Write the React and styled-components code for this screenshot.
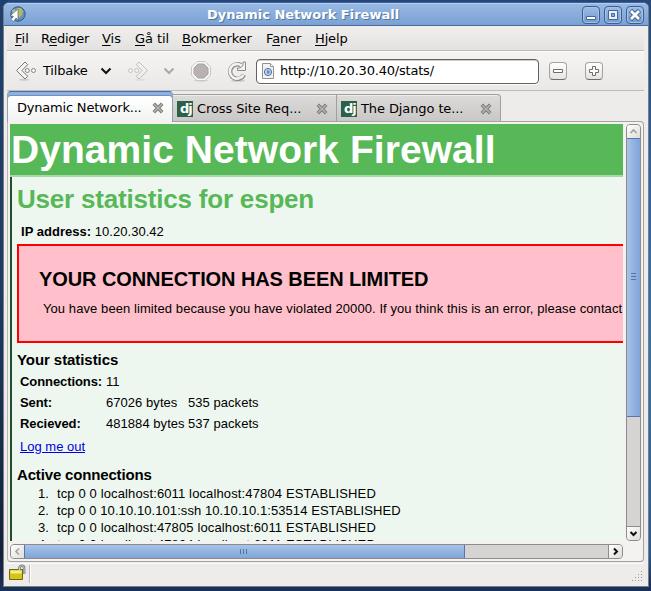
import React from "react";
import styled, { createGlobalStyle } from "styled-components";

const Global = createGlobalStyle`
  * { box-sizing: border-box; }
  html, body { margin: 0; padding: 0; overflow: hidden; }
  body { font-family: "DejaVu Sans", sans-serif; font-size: 13px; color: #000; }
`;

const Desktop = styled.div`
  width: 651px;
  height: 591px;
  padding: 2px 2px 4px 3px;
  background: linear-gradient(180deg, transparent 94%, #17305a 99%),
    linear-gradient(180deg, #1f406e 0%, #1d3b66 50%, #111d36 100%) left / 8px 100% no-repeat,
    linear-gradient(180deg, #264a7c 0%, #2f66a6 35%, #3473aa 60%, #28568f 100%) right / 8px 100% no-repeat,
    #24467a;
`;

const Window = styled.div`
  width: 646px;
  height: 585px;
  border: 1px solid #7d7d7b;
  border-top-color: #3f6296;
  border-radius: 6px 6px 0 0;
  background: #edeceb;
  display: flex;
  flex-direction: column;
  overflow: hidden;
`;

const TitleBar = styled.header`
  height: 23px;
  flex: none;
  display: flex;
  align-items: center;
  padding: 0 4px 0 5px;
  border-top: 1px solid #b5cdec;
  border-bottom: 1px solid #476a9f;
  background: linear-gradient(#97b8e4, #7ba1d3);
`;

const WindowTitle = styled.div`
  flex: 1;
  padding-right: 2px;
  text-align: center;
  color: #fff;
  font-weight: bold;
  font-size: 13px;
  line-height: 20px;
  text-shadow: 1px 1px 0 #55779f;
  white-space: nowrap;
`;

const WindowButtons = styled.div`
  width: 62px;
  display: flex;
  gap: 4px;
`;

const WindowButton = styled.div`
  width: 18px;
  height: 18px;
  border: 1px solid #3c5f92;
  border-radius: 4px;
  background: linear-gradient(#9dbce6, #7399cc);
  box-shadow: inset 0 0 0 1px #a5c1e8;
  svg { display: block; width: 16px; height: 16px; }
`;

const MenuBar = styled.nav`
  height: 25px;
  flex: none;
  margin: 0 4px 0 3px;
  display: flex;
  padding: 3px 0 0 8px;
  border-bottom: 1px solid #bdbcba;
  background: linear-gradient(#f0efee, #e3e2e0);
`;

const MenuItem = styled.span`
  width: ${(p) => p.$w}px;
  flex: none;
  line-height: 19px;
  letter-spacing: ${(p) => p.$ls}px;
  white-space: nowrap;
  u { text-underline-offset: 2px; text-decoration-thickness: 1px; }
`;

const ToolBar = styled.div`
  height: 40px;
  flex: none;
  margin: 0 4px 0 3px;
  border-top: 1px solid #fbfbfb;
  border-bottom: 1px solid #bdbcba;
  background: linear-gradient(#f5f4f3, #e9e8e6);
  display: flex;
  align-items: center;
  padding-left: 8px;
`;

const ToolIcon = styled.svg`
  width: ${(p) => p.$w}px;
  height: ${(p) => p.$h || 24}px;
  margin-left: ${(p) => p.$ml || 0}px;
  flex: none;
  overflow: visible;
`;

const ToolLabel = styled.span`
  width: 45px;
  margin-left: 6px;
  line-height: 20px;
  letter-spacing: -0.2px;
  white-space: nowrap;
`;

const AddressBar = styled.div`
  width: 283px;
  height: 25px;
  margin-left: 8px;
  flex: none;
  border: 1px solid #62615f;
  border-radius: 4px;
  background: #fff;
  box-shadow: inset 0 1px 0 #cfcecc, 0 1px 0 #fbfbfb;
  display: flex;
  align-items: center;
  padding-left: 4px;
  gap: 5px;
`;

const AddressText = styled.span`
  line-height: 22px;
  letter-spacing: -0.2px;
`;

const ZoomButton = styled.div`
  width: 18px;
  height: 18px;
  margin-left: ${(p) => p.$ml}px;
  flex: none;
  border: 1px solid #a3a29f;
  border-bottom-color: #6e6d6a;
  border-radius: 4px;
  background: linear-gradient(#fff, #e4e3e1);
  svg { display: block; width: 16px; height: 16px; }
`;

const TabStrip = styled.div`
  height: 30px;
  flex: none;
  margin-left: 3px;
  display: flex;
  align-items: flex-end;
`;

const Tab = styled.div`
  width: ${(p) => p.$w}px;
  height: ${(p) => (p.$active ? 31 : 27)}px;
  margin-bottom: ${(p) => (p.$active ? -1 : 0)}px;
  z-index: ${(p) => (p.$active ? 1 : 0)};
  flex: none;
  display: flex;
  align-items: center;
  border: 1px solid ${(p) => (p.$active ? "#8f9fb5" : "#a09f9d")};
  border-left-width: ${(p) => (p.$middle ? 0 : 1)}px;
  border-bottom: 0;
  border-top-color: ${(p) => (p.$active ? "#4a6ea8" : "#a09f9d")};
  border-radius: ${(p) => (p.$active ? "4px 4px 0 0" : p.$last ? "0 4px 0 0" : "0")};
  box-shadow: ${(p) => (p.$active ? "inset 0 3px 0 #8fb1e0, inset 0 4px 0 #6d92c6" : "inset 0 1px 0 #ececeb")};
  background: ${(p) => (p.$active ? "linear-gradient(#fff 20%, #f3f2f1)" : "linear-gradient(#dcdbd9, #c9c8c6)")};
`;

const TabTitle = styled.span`
  flex: 1;
  min-width: 0;
  padding-left: ${(p) => p.$pl || 4}px;
  padding-top: ${(p) => p.$pt || 0}px;
  line-height: 18px;
  letter-spacing: ${(p) => p.$ls || 0}px;
  white-space: nowrap;
`;

const DjangoBadge = styled.span`
  width: 16px;
  height: 16px;
  margin: 2px 0 0 4px;
  padding-left: 3px;
  flex: none;
  background: #2c6147;
  color: #fff;
  font: bold 13px/15px "DejaVu Sans", sans-serif;
  letter-spacing: -1px;
`;

const CloseIcon = styled.svg`
  width: 12px;
  height: 12px;
  margin-right: ${(p) => p.$mr}px;
  margin-top: 2px;
  flex: none;
`;

const Notebook = styled.div`
  height: 441px;
  width: 637px;
  flex: none;
  margin-left: 3px;
  padding: 2px 0 1px 2px;
  border: 1px solid #a3a29f;
  border-left-color: #b8b7b5;
  border-radius: 0 4px 4px 4px;
  background: #f3f2f1;
  display: grid;
  grid-template-columns: 613px 15px;
  grid-template-rows: 417px 15px;
  gap: 3px;
`;

const Page = styled.main`
  width: 613px;
  height: 417px;
  overflow: hidden;
  background: #eef7ef;
  font-family: "Liberation Sans", Arial, sans-serif;
  font-size: 13px;
  line-height: 17px;
  white-space: nowrap;
`;

const PageHeader = styled.h1`
  margin: 0;
  height: 53px;
  padding-left: 1px;
  background: #57b857;
  border-bottom: 2px solid #a6d9a7;
  color: #fff;
  font-size: 39px;
  line-height: 52px;
  letter-spacing: 0.05px;
`;

const PageBody = styled.div`
  height: 420px;
  padding-left: 5px;
  border-left: 2px solid #20502a;
`;

const UserHeading = styled.h2`
  margin: 0;
  padding-top: 7px;
  height: 46px;
  color: #57b857;
  font-size: 26px;
  line-height: 30px;
  letter-spacing: -0.2px;
`;

const Line = styled.div`
  height: ${(p) => p.$h || 17}px;
  padding-left: ${(p) => p.$pl || 0}px;
  letter-spacing: ${(p) => p.$ls || 0}px;
`;

const Warning = styled.section`
  width: 720px;
  height: 99px;
  padding: 21px 0 0 20px;
  border: 2px solid #f00;
  background: #ffc0cb;
`;

const WarningHeading = styled.h2`
  margin: 0 0 9px;
  font-size: 20px;
  line-height: 24px;
  letter-spacing: -0.09px;
`;

const SectionHeading = styled.h3`
  margin: ${(p) => p.$mt}px 0 0;
  font-size: 15px;
  line-height: 18px;
  letter-spacing: ${(p) => p.$ls || 0}px;
`;

const StatsGrid = styled.div`
  margin-top: 2px;
  padding-left: 3px;
  display: grid;
  grid-template-columns: 86px 82px 90px;
  grid-auto-rows: 21px;
  line-height: 21px;
`;

const Cell = styled.span`
  letter-spacing: ${(p) => (p.$bold ? -0.08 : 0.05)}px;
  font-weight: ${(p) => (p.$bold ? "bold" : "normal")};
`;

const LogoutLink = styled.a`
  display: block;
  height: 17px;
  margin: 4px 0 0 3px;
  color: #0000e6;
  text-decoration: underline;
`;

const ConnectionList = styled.div`
  margin-top: 1px;
`;

const ConnectionRow = styled.div`
  display: grid;
  grid-template-columns: 19px auto;
  padding-left: 21px;
  line-height: 17px;
`;

const ConnectionText = styled.span`
  letter-spacing: ${(p) => p.$ls}px;
`;

const VScroll = styled.div`
  width: 15px;
  height: 417px;
  border: 1px solid #8d8c8a;
  border-radius: 4px;
  background: #d5d4d2;
  display: flex;
  flex-direction: column;
  overflow: hidden;
`;

const HScroll = styled(VScroll)`
  width: 613px;
  height: 15px;
  flex-direction: row;
`;

const ScrollButton = styled.div`
  width: ${(p) => p.$w}px;
  height: ${(p) => p.$h}px;
  flex: none;
  background: linear-gradient(135deg, #fff, #dddcda);
  border: 0 solid #8d8c8a;
  ${(p) => p.$edge && `border-${p.$edge}-width: 1px;`}
  svg { display: block; width: 13px; height: 13px; }
`;

const VThumb = styled.div`
  height: 279px;
  margin: 0 -1px;
  flex: none;
  border: 1px solid #5476ad;
  background: linear-gradient(90deg, #a6c3ea, #80a4d7);
  display: flex;
  align-items: center;
  justify-content: center;
`;

const HThumb = styled(VThumb)`
  width: 441px;
  height: 15px;
  margin: -1px 0 0 -1px;
  background: linear-gradient(#a6c3ea, #7fa5d7);
`;

const Grip = styled.svg`
  width: 7px;
  height: 7px;
  margin-bottom: ${(p) => p.$mb || 0}px;
  margin-right: ${(p) => p.$mr || 0}px;
`;

const Track = styled.div`
  flex: 1;
`;

const StatusBar = styled.footer`
  flex: 1;
  margin: 1px 4px 0 3px;
  border-top: 1px solid #fbfbfb;
  display: flex;
  align-items: flex-start;
  background: #edeceb;
`;

const StatusDivider = styled.div`
  width: 2px;
  height: 18px;
  margin: 1px 0 0 4px;
  border-left: 1px solid #b9b8b6;
  border-right: 1px solid #fff;
`;

function Globe() {
  return (
    <ToolIcon $w={17} $h={17} viewBox="0 0 17 17">
      <circle cx="9" cy="8" r="7.2" fill="#658dbb" stroke="#31588e" />
      <path d="M8 2l4 0 2 3-1 4-3 3-2-4 1-3-2-1z" fill="#afba65" />
      <path d="M3 4l3-1 1 3-3 3z" fill="#b5c183" />
      <path d="M9 3v11l-2-2-2.500 3.500L2 13.500 4.500 10.500 1.500 9.500z" fill="#fff" stroke="#555e68" strokeWidth=".6" />
    </ToolIcon>
  );
}

function Arrow({ flip, faded }) {
  return (
    <g transform={flip ? "translate(21 0) scale(-1 1)" : undefined} opacity={faded ? 0.4 : 1}>
      <ellipse cx="9" cy="20.8" rx="5" ry="1" fill="#000" opacity=".13" />
      <path d="M10 3L1.500 11.500l8.500 8.500 2.700-2.700-5.800-5.800 5.800-5.800z" fill="#f4f4f3" stroke="#777673" strokeLinejoin="round" />
      <circle cx="12.3" cy="11.500" r="2" fill="#fafafa" stroke="#777673" strokeWidth=".9" />
      <circle cx="18.5" cy="11.500" r="2" fill="#fafafa" stroke="#777673" strokeWidth=".9" />
    </g>
  );
}

function Chevron({ color, ml }) {
  return (
    <ToolIcon $w={12} $h={12} $ml={ml} viewBox="0 0 12 12">
      <path d="M1.5 3.5l4.5 4.5 4.5-4.5" fill="none" stroke={color} strokeWidth="2" />
    </ToolIcon>
  );
}

function Close({ mr }) {
  return (
    <CloseIcon $mr={mr} viewBox="0 0 12 12">
      <path d="M1.800 1.800l8.400 8.400M10.200 1.800L1.800 10.200" stroke="#7c7e79" strokeWidth="3.6" />
      <path d="M2.2 2.2l7.6 7.6M9.8 2.2L2.2 9.8" stroke="#b4b4b0" strokeWidth="1.5" />
    </CloseIcon>
  );
}

const menus = [
  ["", "F", "il", 26, 0],
  ["R", "e", "diger", 61, -0.25],
  ["", "V", "is", 33, 0],
  ["", "G", "å til", 47, -0.1],
  ["", "B", "okmerker", 84, -0.12],
  ["F", "a", "ner", 49, -0.15],
  ["", "H", "jelp", 40, -0.15],
];

const stats = [
  ["Connections:", "11", ""],
  ["Sent:", "67026 bytes", "535 packets"],
  ["Recieved:", "481884 bytes", "537 packets"],
];

const connections = [
  ["tcp 0 0 localhost:6011 localhost:47804 ESTABLISHED", 0.13],
  ["tcp 0 0 10.10.10.101:ssh 10.10.10.1:53514 ESTABLISHED", 0.08],
  ["tcp 0 0 localhost:47805 localhost:6011 ESTABLISHED", 0.13],
  ["tcp 0 0 localhost:47804 localhost:6011 ESTABLISHED", 0.13],
];

export default function App() {
  return (
    <Desktop>
      <Global />
      <Window>
        <TitleBar>
          <Globe />
          <WindowTitle>Dynamic Network Firewall</WindowTitle>
          <WindowButtons>
            <WindowButton>
              <svg viewBox="0 0 16 16"><path d="M3.500 9.500h9v3h-9z" fill="#fff" stroke="#426799" /></svg>
            </WindowButton>
            <WindowButton>
              <svg viewBox="0 0 16 16">
                <path d="M3.500 3.500h9v9h-9z" fill="#e9f0f9" stroke="#426799" />
                <path d="M6.500 6.500h3v3h-3z" fill="#8badda" stroke="#426799" />
              </svg>
            </WindowButton>
            <WindowButton>
              <svg viewBox="0 0 16 16">
                <path d="M3.500 3.500l9 9M12.500 3.500l-9 9" stroke="#426799" strokeWidth="4.6" />
                <path d="M4 4l8 8M12 4l-8 8" stroke="#fff" strokeWidth="2.800" />
              </svg>
            </WindowButton>
          </WindowButtons>
        </TitleBar>
        <MenuBar>
          {menus.map(([before, key, after, w, ls]) => (
            <MenuItem key={after} $w={w} $ls={ls}>{before}<u>{key}</u>{after}</MenuItem>
          ))}
        </MenuBar>
        <ToolBar>
          <ToolIcon $w={22} viewBox="0 0 22 24"><Arrow /></ToolIcon>
          <ToolLabel>Tilbake</ToolLabel>
          <Chevron color="#111" ml={12} />
          <ToolIcon $w={22} $ml={16} viewBox="0 0 22 24"><Arrow flip faded /></ToolIcon>
          <Chevron color="#aaa9a6" ml={13} />
          <ToolIcon $w={22} $ml={15} viewBox="0 0 22 24">
            <ellipse cx="11" cy="21.5" rx="7" ry="1.2" opacity=".12" />
            <path d="M7 2.500h8l5.500 5.500v8L15 21.500H7L1.500 16V8z" fill="#f7f7f6" stroke="#c9c8c5" />
            <path d="M8 5h6l4 4v6l-4 4H8l-4-4V9z" fill="#bab2b2" stroke="#a8a3a2" />
          </ToolIcon>
          <ToolIcon $w={22} $ml={14} viewBox="0 0 22 24">
            <ellipse cx="12" cy="21.800" rx="7" ry="1" opacity=".15" />
            <path d="M18 15.800A7.300 7.300 0 1 1 15 6.200" fill="none" stroke="#8c8b88" strokeWidth="4.400" />
            <path d="M19.500 3v8.500H11.500v-2.500h2.500l3-2.500V3z" fill="#f2f2f1" stroke="#8c8b88" />
            <path d="M17.500 15.800A7.300 7.300 0 1 1 15.500 6.500" fill="none" stroke="#f2f2f1" strokeWidth="2.600" />
          </ToolIcon>
          <AddressBar>
            <ToolIcon $w={14} $h={16} viewBox="0 0 14 16">
              <path d="M1.500 .5h8l3 3v12h-11z" fill="#f3f3f2" stroke="#92928f" />
              <path d="M9.500 .5v3h3" fill="#fff" stroke="#92928f" />
              <circle cx="7" cy="9" r="3.600" fill="#c3d4ed" stroke="#4c70a9" />
              <path d="M7 7v4M6 9h3" stroke="#4c70a9" />
            </ToolIcon>
            <AddressText>http://10.20.30.40/stats/</AddressText>
          </AddressBar>
          <ZoomButton $ml={10}>
            <svg viewBox="0 0 16 16"><path d="M3.500 6.500h9v3h-9z" fill="#fff" stroke="#6d6c6a" /></svg>
          </ZoomButton>
          <ZoomButton $ml={18}>
            <svg viewBox="0 0 16 16"><path d="M6.500 3.500h3v3h3v3h-3v3h-3v-3h-3v-3h3z" fill="#fff" stroke="#6d6c6a" /></svg>
          </ZoomButton>
        </ToolBar>
        <TabStrip>
          <Tab $w={166} $active>
            <TabTitle $pl={9} $pt={1} $ls={-0.2}>Dynamic Network...</TabTitle>
            <Close mr={8} />
          </Tab>
          <Tab $w={164} $middle>
            <DjangoBadge>dj</DjangoBadge>
            <TabTitle $ls={-0.1} $pt={2}>Cross Site Req...</TabTitle>
            <Close mr={8} />
          </Tab>
          <Tab $w={164} $middle $last>
            <DjangoBadge>dj</DjangoBadge>
            <TabTitle $ls={-0.1} $pt={2}>The Django te...</TabTitle>
            <Close mr={8} />
          </Tab>
        </TabStrip>
        <Notebook>
          <Page>
            <PageHeader>Dynamic Network Firewall</PageHeader>
            <PageBody>
              <UserHeading>User statistics for espen</UserHeading>
              <Line $h={21} $pl={4} $ls={0.03}><b>IP address:</b> 10.20.30.42</Line>
              <Warning>
                <WarningHeading>YOUR CONNECTION HAS BEEN LIMITED</WarningHeading>
                <Line $pl={4} $ls={0.08}>
                  You have been limited because you have violated 20000. If you think this is an error, please contact
                </Line>
              </Warning>
              <SectionHeading $mt={8} $ls={-0.07}>Your statistics</SectionHeading>
              <StatsGrid>
                {stats.map(([label, amount, packets]) => (
                  <React.Fragment key={label}>
                    <Cell $bold>{label}</Cell>
                    <Cell>{amount}</Cell>
                    <Cell>{packets}</Cell>
                  </React.Fragment>
                ))}
              </StatsGrid>
              <LogoutLink>Log me out</LogoutLink>
              <SectionHeading $mt={11} $ls={-0.16}>Active connections</SectionHeading>
              <ConnectionList>
                {connections.map(([text, ls], i) => (
                  <ConnectionRow key={text}>
                    <span>{i + 1}.</span>
                    <ConnectionText $ls={ls}>{text}</ConnectionText>
                  </ConnectionRow>
                ))}
              </ConnectionList>
            </PageBody>
          </Page>
          <VScroll>
            <ScrollButton $w={13} $h={13}>
              <svg viewBox="0 0 13 13"><path d="M3.500 8l3-3 3 3" fill="none" stroke="#a2a19e" strokeWidth="1.600" /></svg>
            </ScrollButton>
            <VThumb>
              <Grip $mb={2} viewBox="0 0 7 7"><path d="M1 .5h5M1 3.500h5M1 6.500h5" stroke="#4f73a8" /></Grip>
            </VThumb>
            <Track />
            <ScrollButton $w={13} $h={14} $edge="top">
              <svg viewBox="0 0 13 13"><path d="M3.500 5l3 3 3-3" fill="none" stroke="#111" strokeWidth="2" /></svg>
            </ScrollButton>
          </VScroll>
          <HScroll>
            <ScrollButton $w={14} $h={13}>
              <svg viewBox="0 0 13 13"><path d="M8 3.500l-3 3 3 3" fill="none" stroke="#a2a19e" strokeWidth="1.600" /></svg>
            </ScrollButton>
            <HThumb>
              <Grip $mr={2} viewBox="0 0 7 7"><path d="M.5 1v5M3.500 1v5M6.500 1v5" stroke="#4f73a8" /></Grip>
            </HThumb>
            <Track />
            <ScrollButton $w={14} $h={13} $edge="left">
              <svg viewBox="0 0 13 13"><path d="M5 3.500l3 3-3 3" fill="none" stroke="#111" strokeWidth="2" /></svg>
            </ScrollButton>
          </HScroll>
        </Notebook>
        <StatusBar>
          <ToolIcon $w={17} $h={18} $ml={1} viewBox="0 0 17 18">
            <path d="M1.500 5.500h13v10h-13z" fill="#d3c31a" stroke="#716707" />
            <path d="M2.500 6.500h11v3h-11z" fill="#f3ed83" />
            <path d="M11.500 6V4a2.300 2.300 0 0 1 4.600 0v6" fill="none" stroke="#777a76" strokeWidth="2.600" />
            <path d="M11.500 6V4a2.300 2.300 0 0 1 4.600 0v6" fill="none" stroke="#c8cac6" strokeWidth="1" />
          </ToolIcon>
          <StatusDivider />
          <Track />
          <ToolIcon $w={12} $h={22} viewBox="0 0 12 22">
            <path d="M9 7.500h1M6 10.500h1M9 10.500h1M3 13.500h1M6 13.500h1M9 13.500h1M0 16.500h1M3 16.500h1M6 16.500h1M9 16.500h1" stroke="#9b9a97" />
          </ToolIcon>
        </StatusBar>
      </Window>
    </Desktop>
  );
}
